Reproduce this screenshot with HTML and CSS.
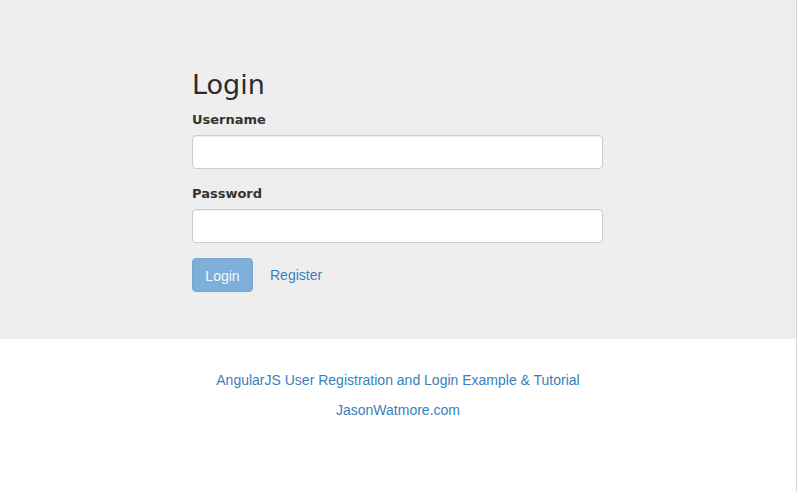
FILE: index.html
```html
<!DOCTYPE html>
<html>
<head>
<meta charset="utf-8">
<link rel="stylesheet" href="styles.css">
</head>
<body>
<div class="page">
  <div class="jumbotron">
    <div class="form-col">
      <h2 class="title">Login</h2>
      <form class="form">
        <div class="group">
          <label class="label">Username</label>
          <input class="input" type="text">
        </div>
        <div class="group">
          <label class="label">Password</label>
          <input class="input" type="password">
        </div>
        <div class="actions">
          <button class="btn" type="button" disabled>Login</button>
          <a class="link register" href="#">Register</a>
        </div>
      </form>
    </div>
  </div>
  <div class="credits">
    <p><a class="link" href="#">AngularJS User Registration and Login Example &amp; Tutorial</a></p>
    <p><a class="link" href="#">JasonWatmore.com</a></p>
  </div>
</div>
</body>
</html>
```

FILE: styles.css
```css
html, body {
  margin: 0;
  padding: 0;
  background: #fff;
}
body {
  font-family: "Liberation Sans", Arial, sans-serif;
  font-size: 14px;
  line-height: 1.42857;
  color: #333;
}
.page {
  width: 796px;
  min-height: 491px;
  border-right: 1px solid #d6d6d6;
}
.jumbotron {
  background: #eee;
  height: 339px;
  box-sizing: border-box;
  padding-top: 67px;
}
.form-col {
  width: 411px;
  margin-left: 192px;
}
.title {
  font-family: "DejaVu Sans", sans-serif;
  font-weight: 400;
  font-size: 27px;
  line-height: 36px;
  margin: 0 0 7px 0;
  color: #2b2b2b;
}
.form {
  margin: 0;
}
.group {
  margin-bottom: 15px;
}
.label {
  display: block;
  font-family: "DejaVu Sans", sans-serif;
  font-weight: 700;
  font-size: 13px;
  line-height: 20px;
  margin-bottom: 5px;
}
.input {
  display: block;
  box-sizing: border-box;
  width: 411px;
  height: 34px;
  border: 1px solid #ccc;
  border-radius: 4px;
  background: #fff;
  box-shadow: inset 0 1px 1px rgba(0,0,0,.075);
  margin: 0;
  padding: 6px 12px;
}
.actions {
  display: flex;
  align-items: center;
  gap: 17px;
}
.btn {
  width: 61px;
  height: 34px;
  box-sizing: border-box;
  border: 1px solid #76a8d3;
  border-radius: 4px;
  background: #7eafd9;
  color: #f4f7fa;
  font-family: "Liberation Sans", Arial, sans-serif;
  font-size: 14px;
  padding: 7px 12px 5px;
}
.register {
  padding-top: 2px;
}
.link {
  color: #3a80bd;
  text-decoration: none;
}
.credits {
  text-align: center;
  padding-top: 31px;
}
.credits p {
  margin: 0 0 10px 0;
  line-height: 20px;
}
```
